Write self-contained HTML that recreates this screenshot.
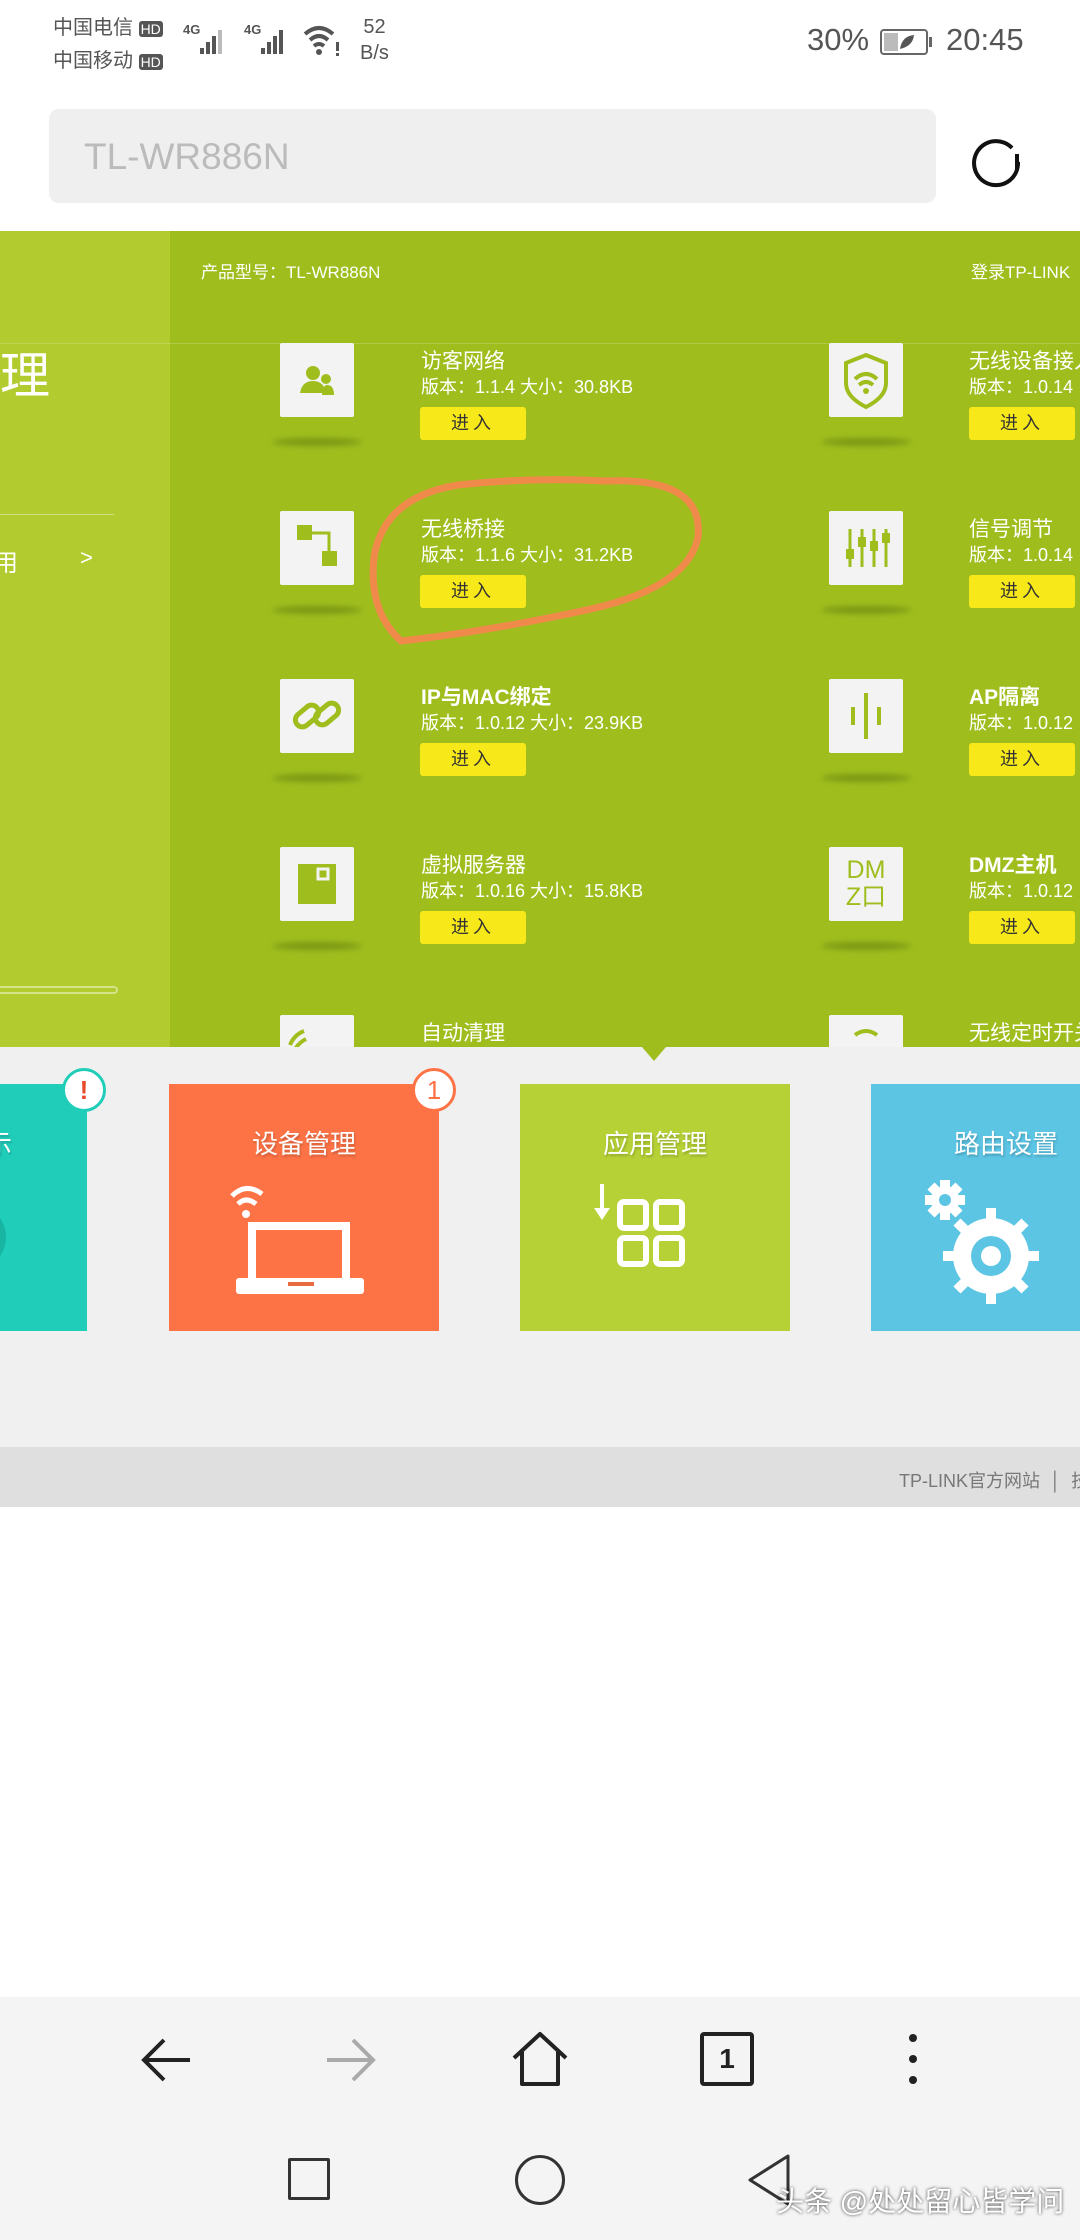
<!DOCTYPE html>
<html><head><meta charset="utf-8"><style>
*{margin:0;padding:0;box-sizing:border-box}
body{width:1080px;height:2240px;position:relative;overflow:hidden;background:#fff;font-family:"Liberation Sans","Noto Sans CJK SC",sans-serif}
.a{position:absolute}
.ic{position:absolute;width:74px;height:74px;background:#f3f3f3;border-radius:2px}
.sh{position:absolute;width:90px;height:8px;border-radius:50%;background:rgba(60,80,0,.35);filter:blur(3px)}
.t{position:absolute;color:#fff;font-size:21px;white-space:nowrap}
.v{position:absolute;color:#fff;font-size:18px;white-space:nowrap}
.b{position:absolute;width:106px;height:33px;background:#f7e81a;border-radius:3px;color:#333;font-size:18px;text-align:center;line-height:33px;letter-spacing:4px}
.tile{position:absolute;top:1084px;height:247px}
.tt{position:absolute;top:40px;width:100%;text-align:center;color:#fff;font-size:26px;text-shadow:1px 2px 2px rgba(0,0,0,.2)}
</style></head><body>
<div class="a" style="left:53px;top:12px;font-size:20px;color:#555;line-height:32px">中国电信 <span style="background:#555;color:#fff;font-size:14px;padding:0 2px;border-radius:3px">HD</span><br>中国移动 <span style="background:#555;color:#fff;font-size:14px;padding:0 2px;border-radius:3px">HD</span></div>
<div class="a" style="left:183px;top:22px;font-size:13px;color:#555;font-weight:bold">4G</div>
<svg class="a" style="left:200px;top:26px" width="32" height="30"><rect x="0" y="22" width="4" height="6" fill="#555"/><rect x="6" y="16" width="4" height="12" fill="#555"/><rect x="12" y="10" width="4" height="18" fill="#555"/><rect x="18" y="4" width="4" height="24" fill="#bbb"/></svg>
<div class="a" style="left:244px;top:22px;font-size:13px;color:#555;font-weight:bold">4G</div>
<svg class="a" style="left:261px;top:26px" width="32" height="30"><rect x="0" y="22" width="4" height="6" fill="#555"/><rect x="6" y="16" width="4" height="12" fill="#555"/><rect x="12" y="10" width="4" height="18" fill="#555"/><rect x="18" y="4" width="4" height="24" fill="#555"/></svg>
<svg class="a" style="left:302px;top:22px" width="40" height="36"><path d="M3 12 Q17 0 31 12 M8 18 Q17 10 26 18 M12 24 Q17 20 22 24" stroke="#555" stroke-width="4" fill="none"/><circle cx="17" cy="30" r="3" fill="#555"/><rect x="34" y="20" width="3" height="9" fill="#555"/><rect x="34" y="31" width="3" height="3" fill="#555"/></svg>
<div class="a" style="left:360px;top:14px;font-size:20px;color:#555;line-height:26px;text-align:center">52<br>B/s</div>
<div class="a" style="left:807px;top:22px;font-size:31px;color:#555">30%</div>
<svg class="a" style="left:880px;top:28px" width="54" height="28"><rect x="1" y="2" width="46" height="24" rx="3" stroke="#666" stroke-width="2" fill="#fff"/><rect x="4" y="5" width="14" height="18" fill="#bbb"/><rect x="49" y="9" width="3" height="10" fill="#666"/><path d="M20 21 Q22 8 34 7 Q33 18 20 21Z" fill="#555"/></svg>
<div class="a" style="left:946px;top:22px;font-size:31px;color:#555">20:45</div>
<div class="a" style="left:49px;top:109px;width:887px;height:94px;background:#efefef;border-radius:10px"></div>
<div class="a" style="left:84px;top:136px;font-size:37px;color:#bbb">TL-WR886N</div>
<svg class="a" style="left:966px;top:128px" width="60" height="60"><path d="M46 20 A22 22 0 1 0 52 34" stroke="#111" stroke-width="4" fill="none"/><path d="M51 26 L51 42" stroke="#111" stroke-width="4"/></svg>
<div class="a" style="left:0;top:231px;width:1080px;height:816px;background:#9fbe1e;overflow:hidden">
  <div class="a" style="left:0;top:0;width:170px;height:816px;background:#b2cb2e"></div>
  <div class="a" style="left:0;top:112px;width:1080px;height:1px;background:rgba(255,255,255,.18)"></div>
  <div class="a" style="left:0;top:105px;font-size:50px;color:#fff">理</div>
  <div class="a" style="left:0;top:283px;width:114px;height:1px;background:rgba(255,255,255,.4)"></div>
  <div class="a" style="left:-6px;top:312px;font-size:24px;color:#fff">用</div>
  <div class="a" style="left:80px;top:314px;font-size:22px;color:#fff">&gt;</div>
  <div class="a" style="left:-4px;top:755px;width:122px;height:8px;border:2px solid #d5e28a;border-radius:4px"></div>
  <div class="a" style="left:201px;top:27px;font-size:17px;color:#fff">产品型号：TL-WR886N</div>
  <div class="a" style="left:971px;top:27px;font-size:17px;color:#fff">登录TP-LINK</div>
</div>
<div class="a" style="left:0;top:231px;width:1080px;height:816px;overflow:hidden">
  <div class="ic" style="left:280px;top:112px"></div><div class="sh" style="left:272px;top:207px"></div>
  <div class="t" style="left:421px;top:114px">访客网络</div><div class="v" style="left:421px;top:142px">版本：1.1.4 大小：30.8KB</div><div class="b" style="left:420px;top:176px">进入</div>
  <svg class="a" style="left:280px;top:112px" width="74" height="74"><circle cx="33" cy="30" r="7" fill="#9fbe1e"/><path d="M20 50 Q22 38 33 38 Q44 38 46 50Z" fill="#9fbe1e"/><circle cx="46" cy="36" r="5" fill="#9fbe1e"/><path d="M42 52 Q43 42 47 42 Q54 42 54 52Z" fill="#9fbe1e"/></svg>

  <div class="ic" style="left:280px;top:280px"></div><div class="sh" style="left:272px;top:375px"></div>
  <div class="t" style="left:421px;top:282px">无线桥接</div><div class="v" style="left:421px;top:310px">版本：1.1.6 大小：31.2KB</div><div class="b" style="left:420px;top:344px">进入</div>
  <svg class="a" style="left:280px;top:280px" width="74" height="74"><rect x="17" y="14" width="15" height="15" fill="#9fbe1e"/><rect x="42" y="40" width="15" height="15" fill="#9fbe1e"/><path d="M32 22 H49 V40" stroke="#9fbe1e" stroke-width="3" fill="none"/></svg>

  <div class="ic" style="left:280px;top:448px"></div><div class="sh" style="left:272px;top:543px"></div>
  <div class="t" style="left:421px;top:450px;font-weight:bold">IP与MAC绑定</div><div class="v" style="left:421px;top:478px">版本：1.0.12 大小：23.9KB</div><div class="b" style="left:420px;top:512px">进入</div>
  <svg class="a" style="left:280px;top:448px" width="74" height="74"><g stroke="#9fbe1e" stroke-width="5" fill="none"><rect x="14" y="30" width="26" height="14" rx="7" transform="rotate(-40 27 37)"/><rect x="34" y="28" width="26" height="14" rx="7" transform="rotate(-40 47 35)"/></g></svg>

  <div class="ic" style="left:280px;top:616px"></div><div class="sh" style="left:272px;top:711px"></div>
  <div class="t" style="left:421px;top:618px">虚拟服务器</div><div class="v" style="left:421px;top:646px">版本：1.0.16 大小：15.8KB</div><div class="b" style="left:420px;top:680px">进入</div>
  <svg class="a" style="left:280px;top:616px" width="74" height="74"><rect x="18" y="17" width="38" height="40" fill="#9fbe1e"/><rect x="38" y="22" width="10" height="10" fill="none" stroke="#f3f3f3" stroke-width="3"/></svg>

  <div class="ic" style="left:280px;top:784px"></div>
  <div class="t" style="left:421px;top:786px">自动清理</div>
  <svg class="a" style="left:280px;top:784px" width="74" height="74"><path d="M10 30 Q14 20 24 16 M14 36 Q18 28 26 24" stroke="#9fbe1e" stroke-width="4" fill="none"/></svg>

  <div class="ic" style="left:829px;top:112px"></div><div class="sh" style="left:821px;top:207px"></div>
  <div class="t" style="left:969px;top:114px">无线设备接入</div><div class="v" style="left:969px;top:142px">版本：1.0.14</div><div class="b" style="left:969px;top:176px">进入</div>
  <svg class="a" style="left:829px;top:112px" width="74" height="74"><path d="M37 12 L57 20 V40 Q57 54 37 64 Q17 54 17 40 V20Z" stroke="#9fbe1e" stroke-width="4" fill="none"/><path d="M26 36 Q37 26 48 36 M30 42 Q37 36 44 42" stroke="#9fbe1e" stroke-width="4" fill="none"/><circle cx="37" cy="48" r="3" fill="#9fbe1e"/></svg>

  <div class="ic" style="left:829px;top:280px"></div><div class="sh" style="left:821px;top:375px"></div>
  <div class="t" style="left:969px;top:282px">信号调节</div><div class="v" style="left:969px;top:310px">版本：1.0.14</div><div class="b" style="left:969px;top:344px">进入</div>
  <svg class="a" style="left:829px;top:280px" width="74" height="74"><g stroke="#9fbe1e" stroke-width="3"><path d="M21 18V56M33 18V56M45 18V56M57 18V56"/></g><g fill="#9fbe1e"><rect x="17" y="38" width="8" height="10"/><rect x="29" y="26" width="8" height="10"/><rect x="41" y="30" width="8" height="10"/><rect x="53" y="22" width="8" height="10"/></g></svg>

  <div class="ic" style="left:829px;top:448px"></div><div class="sh" style="left:821px;top:543px"></div>
  <div class="t" style="left:969px;top:450px;font-weight:bold">AP隔离</div><div class="v" style="left:969px;top:478px">版本：1.0.12</div><div class="b" style="left:969px;top:512px">进入</div>
  <svg class="a" style="left:829px;top:448px" width="74" height="74"><g stroke="#9fbe1e" stroke-width="4"><path d="M37 14V60M24 28V46M50 28V46"/></g></svg>

  <div class="ic" style="left:829px;top:616px"></div><div class="sh" style="left:821px;top:711px"></div>
  <div class="t" style="left:969px;top:618px;font-weight:bold">DMZ主机</div><div class="v" style="left:969px;top:646px">版本：1.0.12</div><div class="b" style="left:969px;top:680px">进入</div>
  <div class="a" style="left:829px;top:626px;width:74px;text-align:center;color:#9fbe1e;font-size:25px;line-height:27px">DM<br>Z口</div>

  <div class="ic" style="left:829px;top:784px"></div>
  <div class="t" style="left:969px;top:786px">无线定时开关</div>
  <svg class="a" style="left:829px;top:784px" width="74" height="74"><path d="M26 20 Q37 12 48 20" stroke="#9fbe1e" stroke-width="4" fill="none"/></svg>

  <svg class="a" style="left:366px;top:244px" width="345" height="175"><path d="M240 6 Q338 2 332 62 Q322 112 225 134 Q125 156 35 166 Q2 136 8 82 Q18 22 92 10 Q165 2 240 6Z" stroke="#f08a4b" stroke-width="7" fill="none"/></svg>
</div>
<div class="a" style="left:0;top:1047px;width:1080px;height:400px;background:#f0f0f0"></div>
<div class="a" style="left:642px;top:1047px;width:0;height:0;border-left:12px solid transparent;border-right:12px solid transparent;border-top:14px solid #9fbe1e"></div>
<div class="tile" style="left:0;width:87px;background:#1fcdb9;overflow:hidden"><div class="tt" style="text-align:left;left:-14px">示</div><div class="a" style="left:-60px;top:120px;width:66px;height:66px;border-radius:50%;background:#19b5a3"></div></div>
<div class="tile" style="left:169px;width:270px;background:#fe7346"><div class="tt">设备管理</div>
<svg class="a" style="left:55px;top:90px" width="150" height="130"><path d="M8 22 Q22 8 38 20 M14 30 Q22 22 32 30" stroke="#fff" stroke-width="5" fill="none"/><circle cx="22" cy="40" r="4" fill="#fff"/><rect x="28" y="52" width="94" height="56" stroke="#fff" stroke-width="8" fill="none"/><rect x="12" y="104" width="128" height="16" rx="3" fill="#fff"/><rect x="64" y="108" width="26" height="4" fill="#e86a3f"/></svg></div>
<div class="tile" style="left:520px;width:270px;background:#b6d136"><div class="tt">应用管理</div>
<svg class="a" style="left:70px;top:90px" width="120" height="130"><path d="M12 10V40" stroke="#fff" stroke-width="4"/><path d="M4 34 L12 46 L20 34Z" fill="#fff"/><g stroke="#fff" stroke-width="6" fill="none"><rect x="30" y="28" width="26" height="26" rx="4"/><rect x="66" y="28" width="26" height="26" rx="4"/><rect x="30" y="64" width="26" height="26" rx="4"/><rect x="66" y="64" width="26" height="26" rx="4"/></g></svg></div>
<div class="tile" style="left:871px;width:209px;background:#5cc5e4"><div class="tt" style="width:270px">路由设置</div>
<svg class="a" style="left:50px;top:90px" width="140" height="140"><g fill="#fff"><circle cx="24" cy="26" r="14"/><circle cx="70" cy="82" r="38"/></g><g stroke="#fff" stroke-width="10"><path d="M24 6V46M4 26H44M10 12L38 40M38 12L10 40"/><path d="M70 34V130M22 82H118M36 48L104 116M104 48L36 116"/></g><circle cx="24" cy="26" r="6" fill="#5cc5e4"/><circle cx="70" cy="82" r="20" fill="#5cc5e4"/><circle cx="70" cy="82" r="10" fill="#fff"/></svg></div>
<div class="a" style="left:62px;top:1068px;width:44px;height:44px;border-radius:50%;background:#fff;border:3px solid #1fcdb9;color:#e74c2a;text-align:center;font-size:26px;line-height:38px;font-weight:bold">!</div>
<div class="a" style="left:412px;top:1068px;width:44px;height:44px;border-radius:50%;background:#fff;border:3px solid #fe7346;color:#fe7346;text-align:center;font-size:26px;line-height:38px">1</div>
<div class="a" style="left:0;top:1447px;width:1080px;height:60px;background:#dfdfdf"></div>
<div class="a" style="left:899px;top:1467px;font-size:18px;color:#777;white-space:nowrap">TP-LINK官方网站 &nbsp;│ &nbsp;技</div>
<div class="a" style="left:0;top:1997px;width:1080px;height:243px;background:#f4f4f4"></div>
<svg class="a" style="left:136px;top:2030px" width="60" height="60"><path d="M54 30H8M28 10L8 30L28 50" stroke="#222" stroke-width="4" fill="none"/></svg>
<svg class="a" style="left:321px;top:2030px" width="60" height="60"><path d="M6 30H52M32 10L52 30L32 50" stroke="#aaa" stroke-width="4" fill="none"/></svg>
<svg class="a" style="left:508px;top:2026px" width="64" height="64"><path d="M6 32L32 8L58 32M14 26V58H50V26" stroke="#222" stroke-width="4" fill="none" stroke-linejoin="round"/></svg>
<div class="a" style="left:700px;top:2032px;width:54px;height:54px;border:4px solid #222;border-radius:4px;text-align:center;font-size:28px;font-weight:bold;line-height:46px;color:#222">1</div>
<svg class="a" style="left:903px;top:2030px" width="20" height="60"><circle cx="10" cy="8" r="4" fill="#222"/><circle cx="10" cy="29" r="4" fill="#222"/><circle cx="10" cy="50" r="4" fill="#222"/></svg>
<div class="a" style="left:288px;top:2158px;width:42px;height:42px;border:3px solid #333;border-radius:2px"></div>
<div class="a" style="left:515px;top:2155px;width:50px;height:50px;border:3px solid #333;border-radius:50%"></div>
<svg class="a" style="left:744px;top:2152px" width="50" height="56"><path d="M44 4L6 28L44 52Z" stroke="#333" stroke-width="3" fill="none" stroke-linejoin="round"/></svg>
<div class="a" style="left:776px;top:2180px;font-size:28px;color:#fff;text-shadow:0 0 3px rgba(0,0,0,.8);white-space:nowrap">头条 @处处留心皆学问</div>
</body></html>
